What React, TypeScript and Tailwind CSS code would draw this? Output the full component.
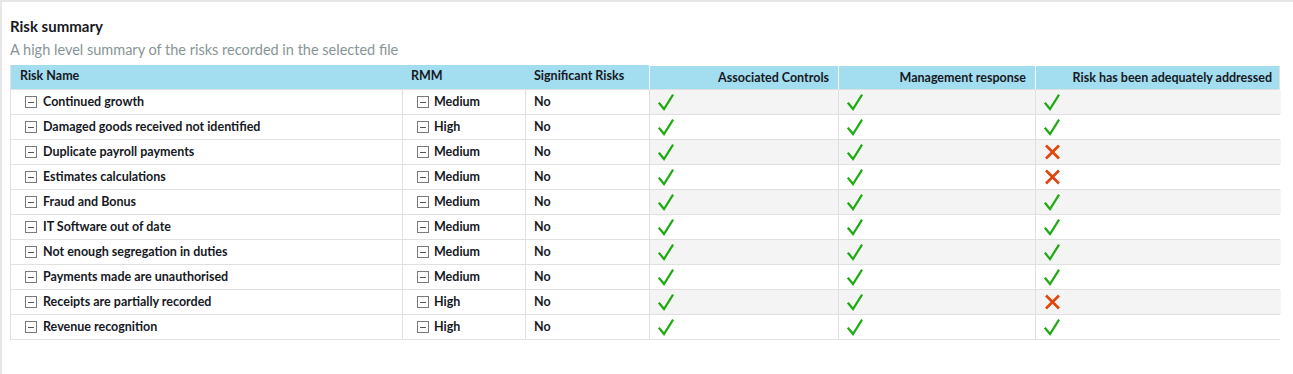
import React from 'react'

type Row = {
  name: string
  rmm: 'Medium' | 'High'
  significant: string
  controls: boolean
  response: boolean
  addressed: boolean
}

const rows: Row[] = [
  { name: 'Continued growth', rmm: 'Medium', significant: 'No', controls: true, response: true, addressed: true },
  { name: 'Damaged goods received not identified', rmm: 'High', significant: 'No', controls: true, response: true, addressed: true },
  { name: 'Duplicate payroll payments', rmm: 'Medium', significant: 'No', controls: true, response: true, addressed: false },
  { name: 'Estimates calculations', rmm: 'Medium', significant: 'No', controls: true, response: true, addressed: false },
  { name: 'Fraud and Bonus', rmm: 'Medium', significant: 'No', controls: true, response: true, addressed: true },
  { name: 'IT Software out of date', rmm: 'Medium', significant: 'No', controls: true, response: true, addressed: true },
  { name: 'Not enough segregation in duties', rmm: 'Medium', significant: 'No', controls: true, response: true, addressed: true },
  { name: 'Payments made are unauthorised', rmm: 'Medium', significant: 'No', controls: true, response: true, addressed: true },
  { name: 'Receipts are partially recorded', rmm: 'High', significant: 'No', controls: true, response: true, addressed: false },
  { name: 'Revenue recognition', rmm: 'High', significant: 'No', controls: true, response: true, addressed: true },
]

const Collapse = () => (
  <span className="flex h-[12px] w-[12px] shrink-0 items-center justify-center border border-[#7a7a7a] bg-white">
    <span className="h-px w-[6px] bg-[#555]" />
  </span>
)

const Mark = ({ ok }: { ok: boolean }) =>
  ok ? (
    <svg width="16" height="17" viewBox="0 0 16 17" className="block">
      <path d="M1.5 9.5 L6 15 L14.5 1.5" fill="none" stroke="#1faa12" strokeWidth="2.2" strokeLinecap="square" />
    </svg>
  ) : (
    <svg width="17" height="16" viewBox="0 0 17 16" className="block">
      <path d="M2 1.5 L15 14.5 M15 1.5 L2 14.5" fill="none" stroke="#e2450c" strokeWidth="2.6" />
    </svg>
  )

const cols = 'grid grid-cols-[391px_123px_124px_189px_197px_246px]'

export default function App() {
  return (
    <main
      className="h-[374px] w-[1293px] overflow-hidden bg-[#e6e6e6] pl-[2px] pt-[2px]"
      style={{ fontFamily: 'Lato, "Open Sans", sans-serif' }}
    >
      <div className="h-full w-full bg-white px-[8px] pt-[15px]">
        <h2 className="text-[15px] font-bold leading-[18px] text-[#16191f]">Risk summary</h2>
        <p className="mt-[6px] text-[14.5px] leading-[18px] text-[#879596]">
          A high level summary of the risks recorded in the selected file
        </p>

        <div className="mt-[6px] w-[1270px] border-x border-b border-[#e0e0e0] text-[12.5px] font-bold text-[#16191f]">
          <div className={`${cols} h-[24px] bg-[#a3ddf0]`}>
            <div className="pl-[9px] pt-[2px]">Risk Name</div>
            <div className="pl-[9px] pt-[2px]">RMM</div>
            <div className="pl-[9px] pt-[2px]">Significant Risks</div>
            <div className="border-l border-t border-white pr-[9px] pt-[3px] text-right">Associated Controls</div>
            <div className="border-l border-t border-white pr-[9px] pt-[3px] text-right">Management response</div>
            <div className="border-l border-t border-white pr-[9px] pt-[3px] text-right">Risk has been adequately addressed</div>
          </div>

          {rows.map((r, i) => {
            const stripe = i % 2 === 0 ? 'bg-[#f4f4f4]' : 'bg-white'
            return (
              <div
                key={r.name}
                className={`${cols} h-[25px] border-t border-[#e0e0e0]`}
              >
                <div className="flex items-center gap-[6px] pl-[14px]">
                  <Collapse />
                  <span>{r.name}</span>
                </div>
                <div className="flex items-center gap-[5px] border-l border-[#e0e0e0] pl-[14px]">
                  <Collapse />
                  <span>{r.rmm}</span>
                </div>
                <div className="flex items-center border-l border-[#e0e0e0] pl-[8px]">{r.significant}</div>
                <div className={`flex items-center border-l border-[#e0e0e0] pl-[8px] ${stripe}`}>
                  <Mark ok={r.controls} />
                </div>
                <div className={`flex items-center border-l border-[#e0e0e0] pl-[8px] ${stripe}`}>
                  <Mark ok={r.response} />
                </div>
                <div className={`flex items-center border-l border-[#e0e0e0] pl-[8px] ${stripe}`}>
                  <Mark ok={r.addressed} />
                </div>
              </div>
            )
          })}
        </div>
      </div>
    </main>
  )
}
